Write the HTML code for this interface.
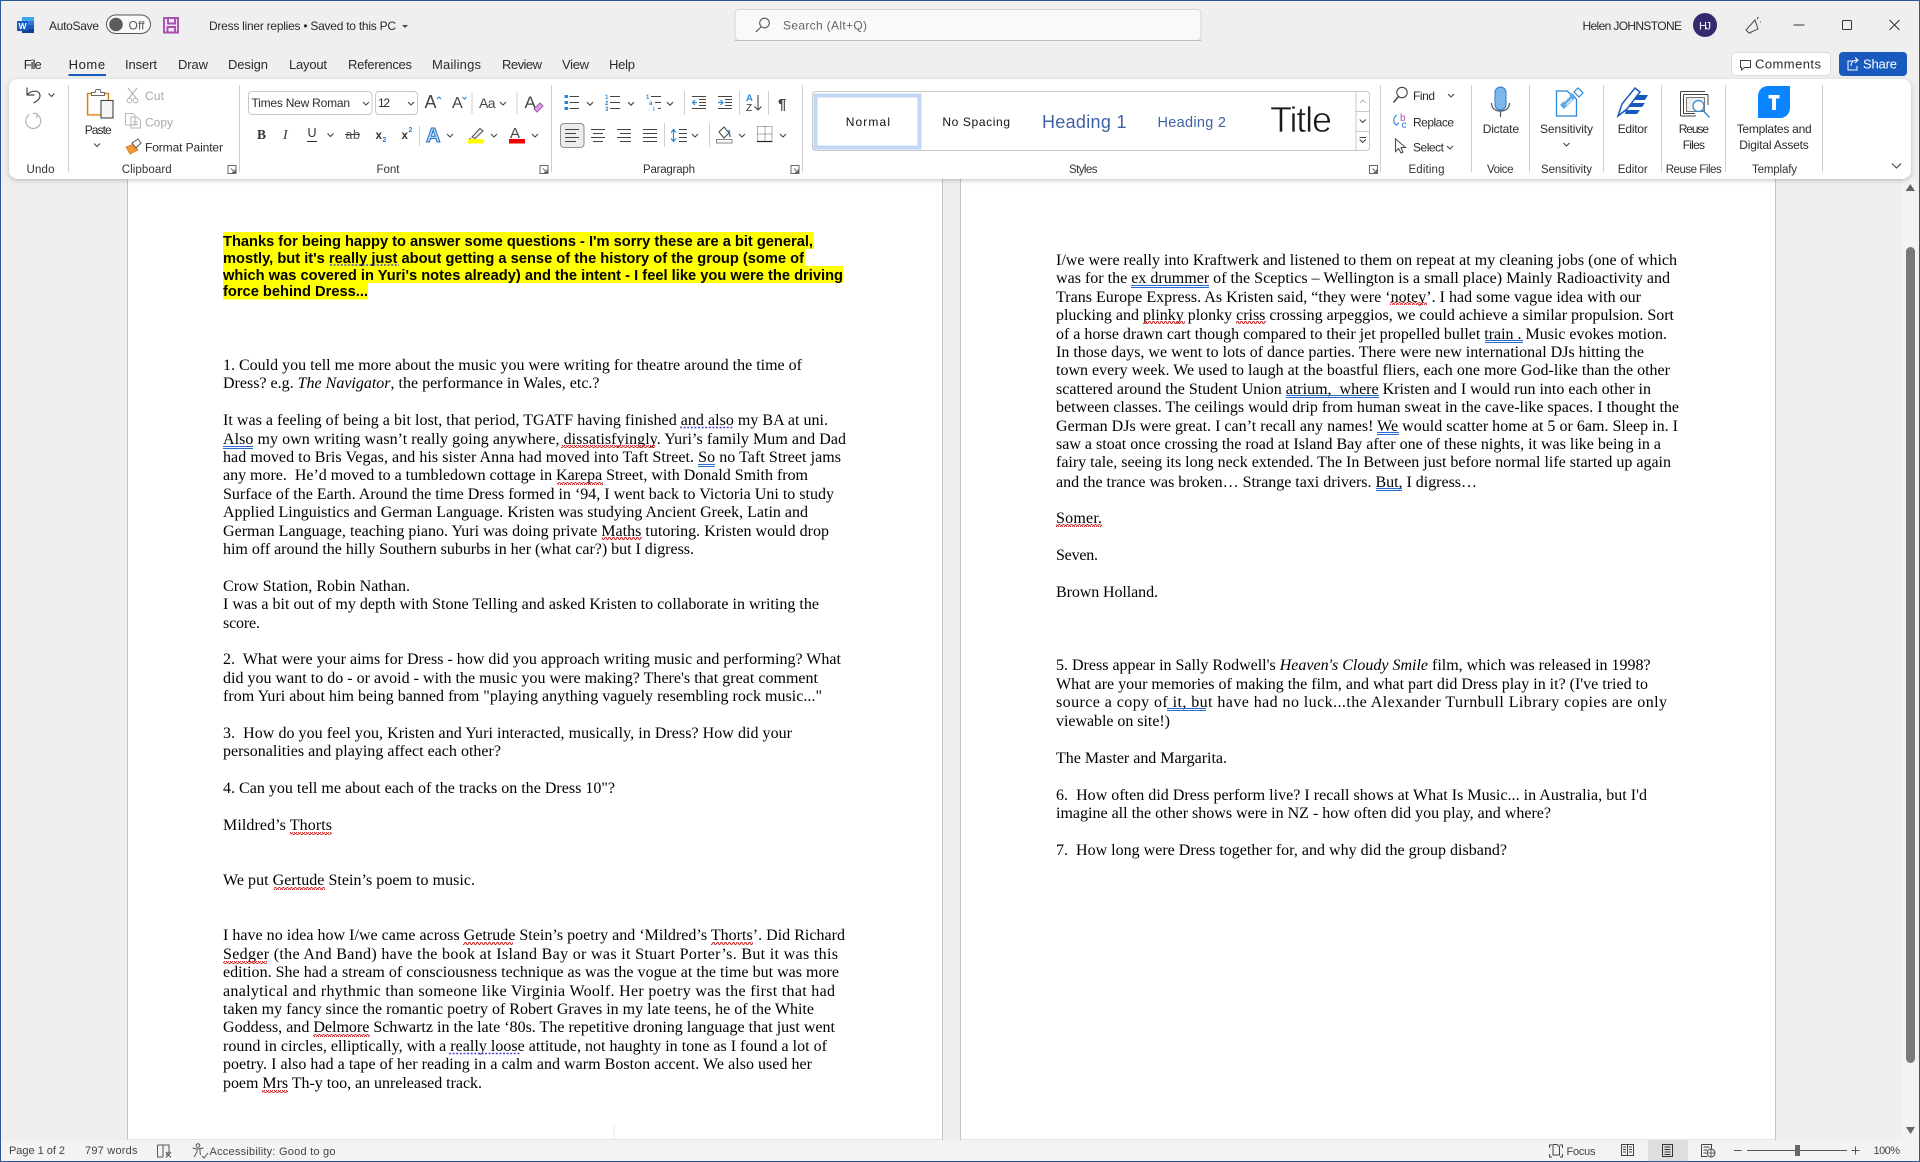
<!DOCTYPE html>
<html lang="en"><head><meta charset="utf-8"><title>Dress liner replies - Word</title>
<style>
html,body{margin:0;padding:0;width:1920px;height:1162px;overflow:hidden;background:#efefef}
svg{position:absolute;left:0;top:0;display:block}
.u{font:12px "Liberation Sans",sans-serif;fill:#2b2b2b}
.g{fill:#a9a9a9}
.l{font-size:11.5px;fill:#333}
.s{font-size:11px;fill:#444}
.b{font:16px "Liberation Serif",serif;fill:#000}
.a{font:bold 14.67px "Liberation Sans",sans-serif;fill:#000}
.i{fill:none;stroke:#444;stroke-width:1.2}
.c{fill:none;stroke:#444;stroke-width:1.1}
.sep{stroke:#cfcfcf;stroke-width:1}
.blue{stroke:#2a6bd0;stroke-width:1;fill:none}
.dot{stroke:#4848e0;stroke-width:1.5;stroke-dasharray:2 1.6;fill:none}
</style></head><body>
<svg width="1920" height="1162" viewBox="0 0 1920 1162" xmlns="http://www.w3.org/2000/svg">
<defs>
<pattern id="w" width="4" height="3" patternUnits="userSpaceOnUse"><path d="M0 2.5L1 .5 2 .5 3 2.5 4 2.5" fill="none" stroke="#d42020" stroke-width=".9"/></pattern>
<filter id="sh" x="-2%" y="-10%" width="104%" height="125%"><feDropShadow dx="0" dy="1.5" stdDeviation="2.5" flood-color="#000" flood-opacity=".22"/></filter>
<g id="v"><path d="M-3-1.5L0 1.5 3-1.5" fill="none" stroke="#444" stroke-width="1.1"/></g>
<g id="launch"><path d="M-4-4H4V4H-4Z M-1-1L3 3M3 0V3H0" fill="none" stroke="#666" stroke-width="1"/></g>
</defs>

<!-- window background & pages -->
<rect width="1920" height="1162" fill="#efefef"/>
<rect x="127.5" y="150" width="815" height="990" fill="#fff" stroke="#c6c6c6"/>
<rect x="960.5" y="150" width="815" height="990" fill="#fff" stroke="#c6c6c6"/>

<!-- scrollbar -->
<rect x="1902" y="179" width="16" height="961" fill="#f3f3f3"/>
<path d="M1910.3 184L1915 191H1905.6Z" fill="#666"/>
<rect x="1906" y="247" width="9" height="816" rx="4.5" fill="#7a7a7a"/>
<path d="M1910.6 1134L1906 1127H1915Z" fill="#666"/>

<!-- LEFT PAGE -->
<rect x="223" y="232" width="591" height="17" fill="#ff0"/>
<rect x="223" y="249" width="582" height="17" fill="#ff0"/>
<rect x="223" y="266" width="620" height="17" fill="#ff0"/>
<rect x="223" y="283" width="145" height="16.500" fill="#ff0"/>
<text class="a" x="223" y="246" textLength="590">Thanks for being happy to answer some questions - I'm sorry these are a bit general,</text>
<text class="a" x="223" y="263" textLength="581">mostly, but it's really just about getting a sense of the history of the group (some of</text>
<text class="a" x="223" y="280" textLength="620">which was covered in Yuri's notes already) and the intent - I feel like you were the driving</text>
<text class="a" x="223" y="296" textLength="145">force behind Dress...</text>

<text class="b" x="223" y="370" textLength="579">1. Could you tell me more about the music you were writing for theatre around the time of</text>
<text class="b" x="223" y="388">Dress? e.g. <tspan font-style="italic">The Navigator</tspan>, the performance in Wales, etc.?</text>
<text class="b" x="223" y="425" textLength="605">It was a feeling of being a bit lost, that period, TGATF having finished and also my BA at uni.</text>
<text class="b" x="223" y="444" textLength="623">Also my own writing wasn’t really going anywhere, dissatisfyingly. Yuri’s family Mum and Dad</text>
<text class="b" x="223" y="462" textLength="618">had moved to Bris Vegas, and his sister Anna had moved into Taft Street. So no Taft Street jams</text>
<text class="b" x="223" y="480" textLength="585" xml:space="preserve">any more.  He’d moved to a tumbledown cottage in Karepa Street, with Donald Smith from</text>
<text class="b" x="223" y="499" textLength="611">Surface of the Earth. Around the time Dress formed in ‘94, I went back to Victoria Uni to study</text>
<text class="b" x="223" y="517" textLength="585">Applied Linguistics and German Language. Kristen was studying Ancient Greek, Latin and</text>
<text class="b" x="223" y="536" textLength="606">German Language, teaching piano. Yuri was doing private Maths tutoring. Kristen would drop</text>
<text class="b" x="223" y="554" textLength="471">him off around the hilly Southern suburbs in her (what car?) but I digress.</text>
<text class="b" x="223" y="591" textLength="187">Crow Station, Robin Nathan.</text>
<text class="b" x="223" y="609" textLength="596">I was a bit out of my depth with Stone Telling and asked Kristen to collaborate in writing the</text>
<text class="b" x="223" y="628" textLength="37">score.</text>
<text class="b" x="223" y="664" textLength="618" xml:space="preserve">2.  What were your aims for Dress - how did you approach writing music and performing? What</text>
<text class="b" x="223" y="683" textLength="595">did you want to do - or avoid - with the music you were making? There's that great comment</text>
<text class="b" x="223" y="701" textLength="599">from Yuri about him being banned from "playing anything vaguely resembling rock music..."</text>
<text class="b" x="223" y="738" textLength="569" xml:space="preserve">3.  How do you feel you, Kristen and Yuri interacted, musically, in Dress? How did your</text>
<text class="b" x="223" y="756" textLength="278">personalities and playing affect each other?</text>
<text class="b" x="223" y="793" textLength="392">4. Can you tell me about each of the tracks on the Dress 10"?</text>
<text class="b" x="223" y="830" textLength="109">Mildred’s Thorts</text>
<text class="b" x="223" y="885" textLength="252">We put Gertude Stein’s poem to music.</text>
<text class="b" x="223" y="940" textLength="622">I have no idea how I/we came across Getrude Stein’s poetry and ‘Mildred’s Thorts’. Did Richard</text>
<text class="b" x="223" y="959" textLength="615">Sedger (the And Band) have the book at Island Bay or was it Stuart Porter’s. But it was this</text>
<text class="b" x="223" y="977" textLength="616">edition. She had a stream of consciousness technique as was the vogue at the time but was more</text>
<text class="b" x="223" y="996" textLength="612">analytical and rhythmic than someone like Virginia Woolf. Her poetry was the first that had</text>
<text class="b" x="223" y="1014" textLength="591">taken my fancy since the romantic poetry of Robert Graves in my late teens, he of the White</text>
<text class="b" x="223" y="1032" textLength="612">Goddess, and Delmore Schwartz in the late ‘80s. The repetitive droning language that just went</text>
<text class="b" x="223" y="1051" textLength="604">round in circles, elliptically, with a really loose attitude, not haughty in tone as I found a lot of</text>
<text class="b" x="223" y="1069" textLength="589">poetry. I also had a tape of her reading in a calm and warm Boston accent. We also used her</text>
<text class="b" x="223" y="1088" textLength="259">poem Mrs Th-y too, an unreleased track.</text>

<!-- RIGHT PAGE -->
<text class="b" x="1056" y="265" textLength="621">I/we were really into Kraftwerk and listened to them on repeat at my cleaning jobs (one of which</text>
<text class="b" x="1056" y="283" textLength="614">was for the ex drummer of the Sceptics – Wellington is a small place) Mainly Radioactivity and</text>
<text class="b" x="1056" y="302" textLength="585">Trans Europe Express. As Kristen said, “they were ‘notey’. I had some vague idea with our</text>
<text class="b" x="1056" y="320" textLength="618">plucking and plinky plonky criss crossing arpeggios, we could achieve a similar propulsion. Sort</text>
<text class="b" x="1056" y="339" textLength="611">of a horse drawn cart though compared to their jet propelled bullet train . Music evokes motion.</text>
<text class="b" x="1056" y="357" textLength="588">In those days, we went to lots of dance parties. There were new international DJs hitting the</text>
<text class="b" x="1056" y="375" textLength="614">town every week. We used to laugh at the boastful fliers, each one more God-like than the other</text>
<text class="b" x="1056" y="394" textLength="595" xml:space="preserve">scattered around the Student Union atrium,  where Kristen and I would run into each other in</text>
<text class="b" x="1056" y="412" textLength="623">between classes. The ceilings would drip from human sweat in the cave-like spaces. I thought the</text>
<text class="b" x="1056" y="431" textLength="622">German DJs were great. I can’t recall any names! We would scatter home at 5 or 6am. Sleep in. I</text>
<text class="b" x="1056" y="449" textLength="605">saw a stoat once crossing the road at Island Bay after one of these nights, it was like being in a</text>
<text class="b" x="1056" y="467" textLength="615">fairy tale, seeing its long neck extended. The In Between just before normal life started up again</text>
<text class="b" x="1056" y="487" textLength="421">and the trance was broken… Strange taxi drivers. But, I digress…</text>
<text class="b" x="1056" y="523" textLength="46">Somer.</text>
<text class="b" x="1056" y="560" textLength="42">Seven.</text>
<text class="b" x="1056" y="597" textLength="102">Brown Holland.</text>
<text class="b" x="1056" y="670">5. Dress appear in Sally Rodwell's <tspan font-style="italic">Heaven's Cloudy Smile</tspan> film, which was released in 1998?</text>
<text class="b" x="1056" y="689" textLength="592">What are your memories of making the film, and what part did Dress play in it? (I've tried to</text>
<text class="b" x="1056" y="707" textLength="611">source a copy of it, but have had no luck...the Alexander Turnbull Library copies are only</text>
<text class="b" x="1056" y="726" textLength="114">viewable on site!)</text>
<text class="b" x="1056" y="763" textLength="171">The Master and Margarita.</text>
<text class="b" x="1056" y="800" textLength="591" xml:space="preserve">6.  How often did Dress perform live? I recall shows at What Is Music... in Australia, but I'd</text>
<text class="b" x="1056" y="818" textLength="495">imagine all the other shows were in NZ - how often did you play, and where?</text>
<text class="b" x="1056" y="855" textLength="451" xml:space="preserve">7.  How long were Dress together for, and why did the group disband?</text>

<!-- proofing marks : red -->
<g fill="url(#w)">
<rect x="561" y="445" width="94" height="3"/>
<rect x="557" y="482" width="46" height="3"/>
<rect x="602" y="537" width="40" height="3"/>
<rect x="290" y="832" width="42" height="3"/>
<rect x="274" y="887" width="51" height="3"/>
<rect x="463" y="942" width="50" height="3"/>
<rect x="711" y="942" width="42" height="3"/>
<rect x="223" y="961" width="44" height="3"/>
<rect x="313" y="1034" width="57" height="3"/>
<rect x="262" y="1090" width="26" height="3"/>
<rect x="1390" y="302" width="37" height="3"/>
<rect x="1143" y="321" width="42" height="3"/>
<rect x="1236" y="321" width="30" height="3"/>
<rect x="1056" y="524" width="46" height="3"/>
</g>
<!-- proofing marks : blue double -->
<path class="blue" d="M223 446.500H253M223 448.500H253M698 464.500H715M698 466.500H715M1131 285.500H1209M1131 287.500H1209M1485 340.500H1523M1485 342.500H1523M1286 395.500H1379M1286 397.500H1379M1377 432.500H1399M1377 434.500H1399M1376 488.500H1402M1376 490.500H1402M1167 708.500H1206M1167 710.500H1206"/>
<!-- proofing marks : dotted -->
<path class="dot" d="M330 265H399M680 427.500H733M449 1053.500H521"/>
<path d="M614 1125V1139" stroke="#e8e8e8" stroke-width="1"/>

<!-- title bar area -->
<rect x="0" y="0" width="1920" height="79" fill="#efefef"/>
<!-- Word icon -->
<rect x="22" y="17" width="12" height="4" fill="#41a5ee"/><rect x="22" y="21" width="12" height="4" fill="#2b7cd3"/><rect x="22" y="25" width="12" height="4" fill="#185abd"/><rect x="22" y="29" width="12" height="4" fill="#103f91"/>
<rect x="17" y="21" width="11" height="10" fill="#185abd"/>
<text x="18.500" y="29" font-family="Liberation Sans" font-weight="700" font-size="8.500" fill="#fff">W</text>
<text class="u" x="49" y="30" textLength="50">AutoSave</text>
<rect x="106.500" y="15" width="44" height="18.500" rx="9.250" fill="#fafafa" stroke="#555"/>
<circle cx="116" cy="24.500" r="6.800" fill="#5c5c5c"/>
<text class="u" x="128.500" y="29.500" textLength="16" style="fill:#555">Off</text>
<path d="M164 18H178V32.500H164Z M168 18V23.500H175V18M167.500 32.500V27H175V32.500" fill="#f3e6f4" stroke="#a94fb0" stroke-width="1.900"/>
<text class="u" x="209" y="30" textLength="187">Dress liner replies • Saved to this PC</text>
<path d="M402 25H408L405 28Z" fill="#444"/>
<!-- search -->
<rect x="735" y="9.500" width="466" height="31" rx="4" fill="#f9f9f9" stroke="#d4d4d4"/>
<path d="M735 40.500H1201" stroke="#bdbdbd"/>
<circle cx="764.500" cy="23" r="4.800" fill="none" stroke="#555" stroke-width="1.100"/><path d="M761 27L755.800 32" stroke="#555" stroke-width="1.200"/>
<text class="u" x="783" y="29.500" textLength="84" style="fill:#666">Search (Alt+Q)</text>
<!-- account -->
<text class="u" x="1582.500" y="30" textLength="99.500">Helen JOHNSTONE</text>
<circle cx="1705" cy="25" r="12" fill="#36296d"/>
<text x="1699" y="29.500" font-family="Liberation Sans" font-size="11" fill="#fff" textLength="12">HJ</text>
<path d="M1746 30L1755 20 1758 29 1749 33ZM1750 32L1751 33.500M1757 19L1758.500 17M1760 22H1761" fill="none" stroke="#555" stroke-width="1.100"/>
<path d="M1793.500 25H1804.500" stroke="#333" stroke-width="1"/>
<rect x="1842.500" y="20.500" width="9" height="9" rx="1" fill="none" stroke="#333"/>
<path d="M1889.500 20L1899.500 30M1899.500 20L1889.500 30" stroke="#333" stroke-width="1"/>

<!-- tabs -->
<g class="u" style="font-size:13px">
<text x="23.700" y="69" textLength="18">File</text>
<text x="68.600" y="69" textLength="36.500" style="fill:#222;font-size:13px">Home</text>
<text x="125" y="69" textLength="32">Insert</text>
<text x="178" y="69" textLength="30">Draw</text>
<text x="228" y="69" textLength="40">Design</text>
<text x="289" y="69" textLength="38">Layout</text>
<text x="348" y="69" textLength="64">References</text>
<text x="432" y="69" textLength="49">Mailings</text>
<text x="502" y="69" textLength="40">Review</text>
<text x="562" y="69" textLength="27">View</text>
<text x="609" y="69" textLength="26">Help</text>
</g>
<rect x="68.500" y="74" width="37.500" height="2" fill="#185abd"/>
<!-- Comments / Share -->
<rect x="1731.500" y="52.500" width="99" height="23" rx="4" fill="#fff" stroke="#dcdcdc"/>
<path d="M1740.500 60.500H1750.500V67.500H1744.500L1741.500 70V67.500H1740.500Z" fill="none" stroke="#444" stroke-width="1"/>
<text class="u" x="1755" y="68.500" textLength="66" style="font-size:13px">Comments</text>
<rect x="1839" y="52" width="68" height="24" rx="4" fill="#185abd"/>
<path d="M1853 61H1848V70H1857V66M1851 66C1851 62 1854 60 1858 60M1855 57.500L1858 60 1855 63" fill="none" stroke="#fff" stroke-width="1"/>
<text x="1863" y="68.500" font-family="Liberation Sans" font-size="13" fill="#fff" textLength="34">Share</text>

<!-- ribbon panel -->
<rect x="9" y="79" width="1902" height="100" rx="9" fill="#fff" filter="url(#sh)"/>
<!-- group separators -->
<g class="sep">
<path d="M68.500 85V172M239.500 85V172M551.500 85V172M802.500 85V172M1380.500 85V172M1471.500 85V172M1529.500 85V172M1603.500 85V172M1661.500 85V172M1725.500 85V172M1822.500 85V172"/>
<path d="M472 92V114M517 92V114M419.500 126V146M684.500 91V115M739.500 91V115M768.500 91V115M664.500 123V147M709.500 123V147"/>
</g>
<!-- Undo -->
<path d="M27 87.500V95H34.500M27 95C31 90 40 89.500 40 96C40 99.500 36.500 101.500 33.500 103" class="i"/>
<use href="#v" x="51.500" y="95"/>
<path d="M37 114.500A7.500 7.500 0 1 1 29.500 114.500M37 113.500V118M37 113.500H33" fill="none" stroke="#b5b5b5" stroke-width="1.200"/>
<text class="u l" x="26.500" y="173" textLength="28">Undo</text>
<!-- Paste -->
<path d="M87.500 93.500H108.500V115H87.500Z" fill="#fbe6b5" stroke="#d97f17" stroke-width="1.300"/>
<rect x="89" y="95" width="18" height="18.500" fill="#fff"/>
<path d="M91.500 95.500V92.500H95L96 89.500H100L101 92.500H104.500V95.500Z" fill="#fff" stroke="#666" stroke-width="1"/>
<rect x="101" y="100.500" width="12" height="17.500" fill="#f5f5f5" stroke="#444" stroke-width="1.100"/>
<text class="u" x="84.700" y="134" textLength="27">Paste</text>
<use href="#v" x="97" y="145"/>
<!-- Cut/Copy/Format Painter -->
<path d="M128 88L136 98M137 88L129 98" fill="none" stroke="#b5b5b5" stroke-width="1.200"/><circle cx="129.500" cy="100.500" r="2.300" fill="none" stroke="#b5b5b5"/><circle cx="135.500" cy="100.500" r="2.300" fill="none" stroke="#b5b5b5"/>
<text class="u g" x="145" y="100" textLength="19" style="fill:#a9a9a9">Cut</text>
<path d="M125.500 113.500H133L135 115.500V125H125.500Z M131 117H137L140.500 120.500V128H131Z M133 122H138M133 124.500H138" fill="none" stroke="#b5b5b5" stroke-width="1"/>
<text class="u g" x="145" y="126.500" textLength="28" style="fill:#a9a9a9">Copy</text>
<path d="M126 147L134 144 138 150 130 154Z" fill="#f09b35" stroke="#d9771a" stroke-width=".8"/>
<path d="M132 143L138 139 141 143 136 148Z" fill="#fff" stroke="#555" stroke-width="1"/>
<text class="u" x="145" y="151.500" textLength="78">Format Painter</text>
<text class="u l" x="121.700" y="173" textLength="50">Clipboard</text>
<use href="#launch" x="232" y="169.500"/>
<!-- Font -->
<rect x="248.500" y="91.500" width="123.500" height="23" rx="3.500" fill="#fff" stroke="#c8c8c8"/>
<text class="u" x="251.500" y="107" textLength="98.500">Times New Roman</text>
<use href="#v" x="366" y="103.500"/>
<rect x="375.500" y="91.500" width="42" height="23" rx="3.500" fill="#fff" stroke="#c8c8c8"/>
<text class="u" x="378" y="107" textLength="12">12</text>
<use href="#v" x="411" y="103.500"/>
<text x="424.500" y="108" font-family="Liberation Sans" font-size="18" fill="#444">A</text>
<path d="M437 99L439 97 441 99" fill="none" stroke="#2b7cd3" stroke-width="1"/>
<text x="452" y="108" font-family="Liberation Sans" font-size="16" fill="#444">A</text>
<path d="M462.500 97L464.500 99 466.500 97" fill="none" stroke="#2b7cd3" stroke-width="1"/>
<text x="479" y="108" font-family="Liberation Sans" font-size="14" fill="#444" textLength="16.500">Aa</text>
<use href="#v" x="503" y="103.500"/>
<text x="524.500" y="108" font-family="Liberation Sans" font-size="17" fill="#444">A</text>
<path d="M534 109L540 103 543 106 537 112Z" fill="#d9a6dc" stroke="#a94fb0" stroke-width="1"/>
<text x="257" y="139" font-family="Liberation Serif" font-weight="700" font-size="13.500" fill="#333">B</text>
<text x="283" y="139" font-family="Liberation Serif" font-style="italic" font-size="14" fill="#333">I</text>
<text x="307.500" y="137" font-family="Liberation Sans" font-size="12.500" fill="#333">U</text><path d="M307 141.500H317" stroke="#333"/>
<use href="#v" x="330.500" y="135"/>
<text x="345.500" y="139" font-family="Liberation Sans" font-size="12.500" fill="#555" textLength="14.500">ab</text><path d="M345 134.500H360" stroke="#444"/>
<text x="375.500" y="139" font-family="Liberation Sans" font-weight="700" font-size="11.500" fill="#333">x</text><text x="382.500" y="142" font-family="Liberation Sans" font-weight="700" font-size="7" fill="#2b7cd3">2</text>
<text x="401.500" y="139" font-family="Liberation Sans" font-weight="700" font-size="11.500" fill="#333">x</text><text x="408.500" y="132" font-family="Liberation Sans" font-weight="700" font-size="7" fill="#2b7cd3">2</text>
<text x="426" y="142" font-family="Liberation Sans" font-weight="700" font-size="20" fill="#bcdcf7" stroke="#1f6fc4" stroke-width="1">A</text>
<use href="#v" x="450" y="135.500"/>
<path d="M472 137L480 128.500 483 131 475 138.500ZM471 138.500L469 139" fill="#eee" stroke="#555" stroke-width="1.100"/>
<rect x="468" y="139" width="16" height="4.500" fill="#ff0"/>
<use href="#v" x="494" y="135.500"/>
<text x="510" y="138" font-family="Liberation Sans" font-size="15" fill="#444">A</text>
<rect x="509" y="139" width="16" height="4.500" fill="#e00"/>
<use href="#v" x="535" y="135.500"/>
<text class="u l" x="376.500" y="173" textLength="23">Font</text>
<use href="#launch" x="544" y="169.500"/>
<!-- Paragraph row 1 -->
<path d="M564.500 96.500H568M564.500 102.500H568M564.500 108.500H568" stroke="#2b88d8" stroke-width="3"/>
<path d="M569.500 96.500H579M569.500 102.500H579M569.500 108.500H579" stroke="#444" stroke-width="1.100"/>
<use href="#v" x="590" y="103.700"/>
<text x="605" y="99" font-family="Liberation Sans" font-weight="700" font-size="6" fill="#2b88d8">1</text><text x="605" y="105" font-family="Liberation Sans" font-weight="700" font-size="6" fill="#2b88d8">2</text><text x="605" y="111" font-family="Liberation Sans" font-weight="700" font-size="6" fill="#2b88d8">3</text>
<path d="M610 96.500H620M610 102.500H620M610 108.500H620" stroke="#444" stroke-width="1.100"/>
<use href="#v" x="631" y="103.700"/>
<text x="646" y="99" font-family="Liberation Sans" font-weight="700" font-size="6" fill="#2b88d8">1</text><text x="649" y="105" font-family="Liberation Sans" font-weight="700" font-size="6" fill="#2b88d8">a</text><text x="653" y="111" font-family="Liberation Sans" font-weight="700" font-size="6" fill="#2b88d8">i</text>
<path d="M651 96.500H661M655 102.500H661M658 108.500H661" stroke="#444" stroke-width="1.100"/>
<use href="#v" x="670" y="103.700"/>
<path d="M692 96.500H706M699 102.500H706M699 99.500H706M699 105.500H706M692 108.500H706" stroke="#444" stroke-width="1"/>
<path d="M697 102.500H692.500M695 100L692.500 102.500 695 105" fill="none" stroke="#2b88d8" stroke-width="1.200"/>
<path d="M718 96.500H732M725 102.500H732M725 99.500H732M725 105.500H732M718 108.500H732" stroke="#444" stroke-width="1"/>
<path d="M718 102.500H723M720.500 100L723 102.500 720.500 105" fill="none" stroke="#2b88d8" stroke-width="1.200"/>
<text x="746" y="101" font-family="Liberation Sans" font-weight="700" font-size="9.500" fill="#2b88d8">A</text>
<text x="746" y="111" font-family="Liberation Sans" font-size="10" fill="#333">Z</text>
<path d="M758 95V110M754.500 106.500L758 110 761.500 106.500" fill="none" stroke="#444" stroke-width="1.100"/>
<text x="778" y="109" font-family="Liberation Sans" font-weight="700" font-size="15" fill="#444">¶</text>
<!-- Paragraph row 2 -->
<rect x="560.500" y="123.500" width="23.500" height="24" rx="3.500" fill="#ececec" stroke="#8c8c8c"/>
<path d="M565 129.500H579M565 133.500H576M565 137.500H579M565 141.500H576" stroke="#444" stroke-width="1"/>
<path d="M591 129.500H605M593 133.500H603M591 137.500H605M593 141.500H603" stroke="#444" stroke-width="1"/>
<path d="M617 129.500H631M620 133.500H631M617 137.500H631M620 141.500H631" stroke="#444" stroke-width="1"/>
<path d="M643 129.500H657M643 133.500H657M643 137.500H657M643 141.500H657" stroke="#444" stroke-width="1"/>
<path d="M673.500 130V141M671 132.500L673.500 129.500 676 132.500M671 138.500L673.500 141.500 676 138.500" fill="none" stroke="#2b88d8" stroke-width="1.200"/>
<path d="M679 129.500H687M679 133.500H687M679 137.500H687M679 141.500H687" stroke="#444" stroke-width="1"/>
<use href="#v" x="695" y="135.500"/>
<path d="M719 132L724 127 729 133 724 138Z" fill="#fff" stroke="#444" stroke-width="1"/>
<path d="M729 130L730 137" stroke="#2b7cd3" stroke-width="1.500"/>
<rect x="716.500" y="139.500" width="15.500" height="3.500" fill="#fff" stroke="#888"/>
<use href="#v" x="742" y="135.500"/>
<path d="M757.500 126.500H772M757.500 126.500V141M772 126.500V141M765 126.500V141M757.500 134H772" fill="none" stroke="#666" stroke-width="1" stroke-dasharray="1 1"/>
<path d="M757 141.500H772.500" stroke="#222" stroke-width="1.200"/>
<use href="#v" x="783" y="135.500"/>
<text class="u l" x="643" y="173" textLength="52">Paragraph</text>
<use href="#launch" x="795" y="169.500"/>
<!-- Styles -->
<rect x="812.500" y="91.500" width="557" height="59" rx="3" fill="#fff" stroke="#c9c9c9"/>
<rect x="815.500" y="95.500" width="104" height="52" fill="#fff" stroke="#c3d6f3" stroke-width="4"/>
<text class="u" x="845.700" y="126" textLength="44.300" style="fill:#111">Normal</text>
<text class="u" x="942.400" y="126" textLength="67.600" style="fill:#111">No Spacing</text>
<text x="1042" y="128" font-family="Liberation Sans" font-size="18" fill="#3f62a6" textLength="84.500">Heading 1</text>
<text x="1157.500" y="127" font-family="Liberation Sans" font-size="14.500" fill="#3f62a6" textLength="68.500">Heading 2</text>
<text x="1270" y="132" font-family="Liberation Sans" font-size="36" fill="#1a1a1a" stroke="#fff" stroke-width=".7" textLength="62">Title</text>
<path d="M1356 91.500V150.500M1356 111.500H1369.500M1356 131.500H1369.500" stroke="#c9c9c9"/>
<path d="M1360 103L1362.700 100 1365.500 103" fill="none" stroke="#bbb" stroke-width="1.100"/>
<use href="#v" x="1362.700" y="121"/>
<path d="M1359.500 137.500H1366" stroke="#444"/><use href="#v" x="1362.700" y="141"/>
<text class="u l" x="1069" y="173" textLength="28.500">Styles</text>
<use href="#launch" x="1373.500" y="169.500"/>
<!-- Editing -->
<circle cx="1402" cy="92.500" r="5.200" fill="none" stroke="#444" stroke-width="1.100"/><path d="M1398.500 96.500L1393.500 102.500" stroke="#444" stroke-width="1.500"/>
<text class="u" x="1413" y="100" textLength="22">Find</text>
<use href="#v" x="1451" y="95.500"/>
<text x="1400" y="121" font-family="Liberation Sans" font-size="10" fill="#a94fb0">b</text>
<text x="1401.500" y="128" font-family="Liberation Sans" font-size="10" fill="#2b7cd3">c</text>
<path d="M1397 115C1393 117 1392.500 123 1396.500 125M1393.500 122.500L1396.500 125 1399 122.500" fill="none" stroke="#2b88d8" stroke-width="1.100"/>
<text class="u" x="1413" y="126.500" textLength="41">Replace</text>
<path d="M1395.500 139V151.500L1398.500 148.500 1401 153 1403 152 1401 147.500H1405.500Z" fill="#fff" stroke="#444" stroke-width="1"/>
<text class="u" x="1413" y="151.500" textLength="31">Select</text>
<use href="#v" x="1450" y="147.500"/>
<text class="u l" x="1408.500" y="173" textLength="36">Editing</text>
<!-- Dictate -->
<rect x="1495" y="87" width="11" height="23" rx="5.500" fill="#7db7ec" stroke="#2b7cd3" stroke-width="1"/>
<path d="M1491.500 103C1491.500 108 1495 111 1500.500 111S1509.500 108 1509.500 103M1500.500 111V117" fill="none" stroke="#555" stroke-width="1.200"/>
<text class="u" x="1482.700" y="133" textLength="36.300">Dictate</text>
<text class="u l" x="1487" y="173" textLength="26.500">Voice</text>
<!-- Sensitivity -->
<path d="M1556.500 91H1567L1576.500 99V116H1556.500Z" fill="#fff" stroke="#2b88d8" stroke-width="1.300"/>
<path d="M1560 105L1572 93 1576 97 1564 109Z" fill="#5aa7e6"/>
<path d="M1574 92L1578 88 1583 93 1579 97Z" fill="#fff" stroke="#2b88d8" stroke-width="1.200"/>
<path d="M1564 102L1570 96M1566 105L1572 99" stroke="#fff" stroke-width="1"/>
<text class="u" x="1540" y="133" textLength="53">Sensitivity</text>
<use href="#v" x="1566.500" y="144.500"/>
<text class="u l" x="1541" y="173" textLength="51">Sensitivity</text>
<!-- Editor -->
<path d="M1618 116L1622 104 1635 88 1640 92 1627 109Z" fill="#fff" stroke="#185abd" stroke-width="1.500"/>
<path d="M1618 116L1622 112 1626 111Z" fill="#185abd"/>
<path d="M1638 95H1648L1645 100H1634ZM1632 103H1645L1642 107H1629ZM1626 110H1640L1637 114H1625Z" fill="#185abd"/>
<text class="u" x="1617.700" y="133" textLength="30">Editor</text>
<text class="u l" x="1617.700" y="173" textLength="30">Editor</text>
<!-- Reuse files -->
<path d="M1680.500 91.500H1705M1683.500 94.500H1708V105M1680.500 91.500V116M1683.500 94.500V113.500H1695M1680.500 116H1696" fill="none" stroke="#444" stroke-width="1"/>
<rect x="1686.500" y="97.500" width="18" height="14" fill="#eee" stroke="#777"/>
<circle cx="1698.500" cy="106" r="5.500" fill="#fff" stroke="#2b88d8" stroke-width="1.200"/>
<path d="M1702.500 110L1709.500 117.500" stroke="#2b88d8" stroke-width="1.300"/>
<text class="u" x="1678.700" y="133" textLength="30.300">Reuse</text>
<text class="u" x="1682.700" y="149" textLength="22.300">Files</text>
<text class="u l" x="1665.700" y="173" textLength="56">Reuse Files</text>
<!-- Templates -->
<path d="M1768 86H1790V108A10 10 0 0 1 1780 118H1758V96A10 10 0 0 1 1768 86Z" fill="#0a84ff"/>
<path d="M1768.500 95H1779.500V98.500H1776V110H1772V98.500H1768.500Z" fill="#fff"/>
<text class="u" x="1736.700" y="133" textLength="75">Templates and</text>
<text class="u" x="1739.300" y="149" textLength="69.500">Digital Assets</text>
<text class="u l" x="1752" y="173" textLength="45">Templafy</text>
<path d="M1892 163.500L1896.500 168 1901 163.500" fill="none" stroke="#444" stroke-width="1.100"/>

<!-- status bar -->
<rect x="0" y="1140" width="1920" height="22" fill="#f3f3f3"/>
<rect x="1648" y="1140" width="40" height="21" fill="#dedede"/>
<g class="u s">
<text class="s" x="9" y="1154" textLength="56">Page 1 of 2</text>
<text class="s" x="85" y="1154" textLength="52.500">797 words</text>
<text class="s" x="209.500" y="1155" textLength="126">Accessibility: Good to go</text>
<text class="s" x="1566.500" y="1155" textLength="29">Focus</text>
<text class="s" x="1873.500" y="1154" textLength="26.500">100%</text>
</g>
<path d="M157.500 1145H169V1152L166 1155M157.500 1145V1157H163M163 1145V1157" fill="none" stroke="#555"/>
<path d="M166 1152L171 1157.500M171 1152L166 1157.500" stroke="#555"/>
<circle cx="198" cy="1145.500" r="1.800" fill="none" stroke="#555"/>
<path d="M192.500 1148L197 1149 203.500 1148M197 1149V1152L194 1157M200 1149V1152L200.500 1155M202 1156L204 1158 208 1153" fill="none" stroke="#555"/>
<path d="M1549.500 1148V1145H1552M1559.500 1145H1562.500V1148M1562.500 1154V1157H1560M1552 1157H1549.500V1154M1553 1155V1144.500H1557L1559.500 1147V1155Z" fill="none" stroke="#444"/>
<path d="M1621.500 1144.500H1627.500V1155.500H1621.500ZM1627.500 1144.500H1633.500V1155.500H1627.500ZM1623 1147H1626M1623 1149.500H1626M1623 1152H1626M1629 1147H1632M1629 1149.500H1632M1629 1152H1632" fill="none" stroke="#444"/>
<path d="M1662.500 1144.500H1672.500V1156.500H1662.500ZM1664.500 1147H1670.500M1664.500 1149.500H1670.500M1664.500 1152H1670.500M1664.500 1154.500H1670.500" fill="none" stroke="#333"/>
<path d="M1701.500 1144.500H1711.500V1149M1701.500 1144.500V1156.500H1707M1703.500 1147H1709.500M1703.500 1150H1707M1703.500 1153H1706" fill="none" stroke="#444"/>
<circle cx="1711" cy="1153" r="4" fill="none" stroke="#444"/><path d="M1707 1153H1715M1711 1149V1157" stroke="#444" stroke-width=".8"/>
<path d="M1734 1150.500H1741.500M1747 1150.500H1847M1851.500 1150.500H1859.500M1855.500 1146.500V1154.500" stroke="#555"/>
<rect x="1795" y="1145" width="5" height="11" fill="#666"/>

<!-- window border -->
<path d="M.5 0V1162M1919.500 0V1162M0 .5H1920M0 1161.500H1920" fill="none" stroke="#2b579a"/>
</svg>
</body></html>
